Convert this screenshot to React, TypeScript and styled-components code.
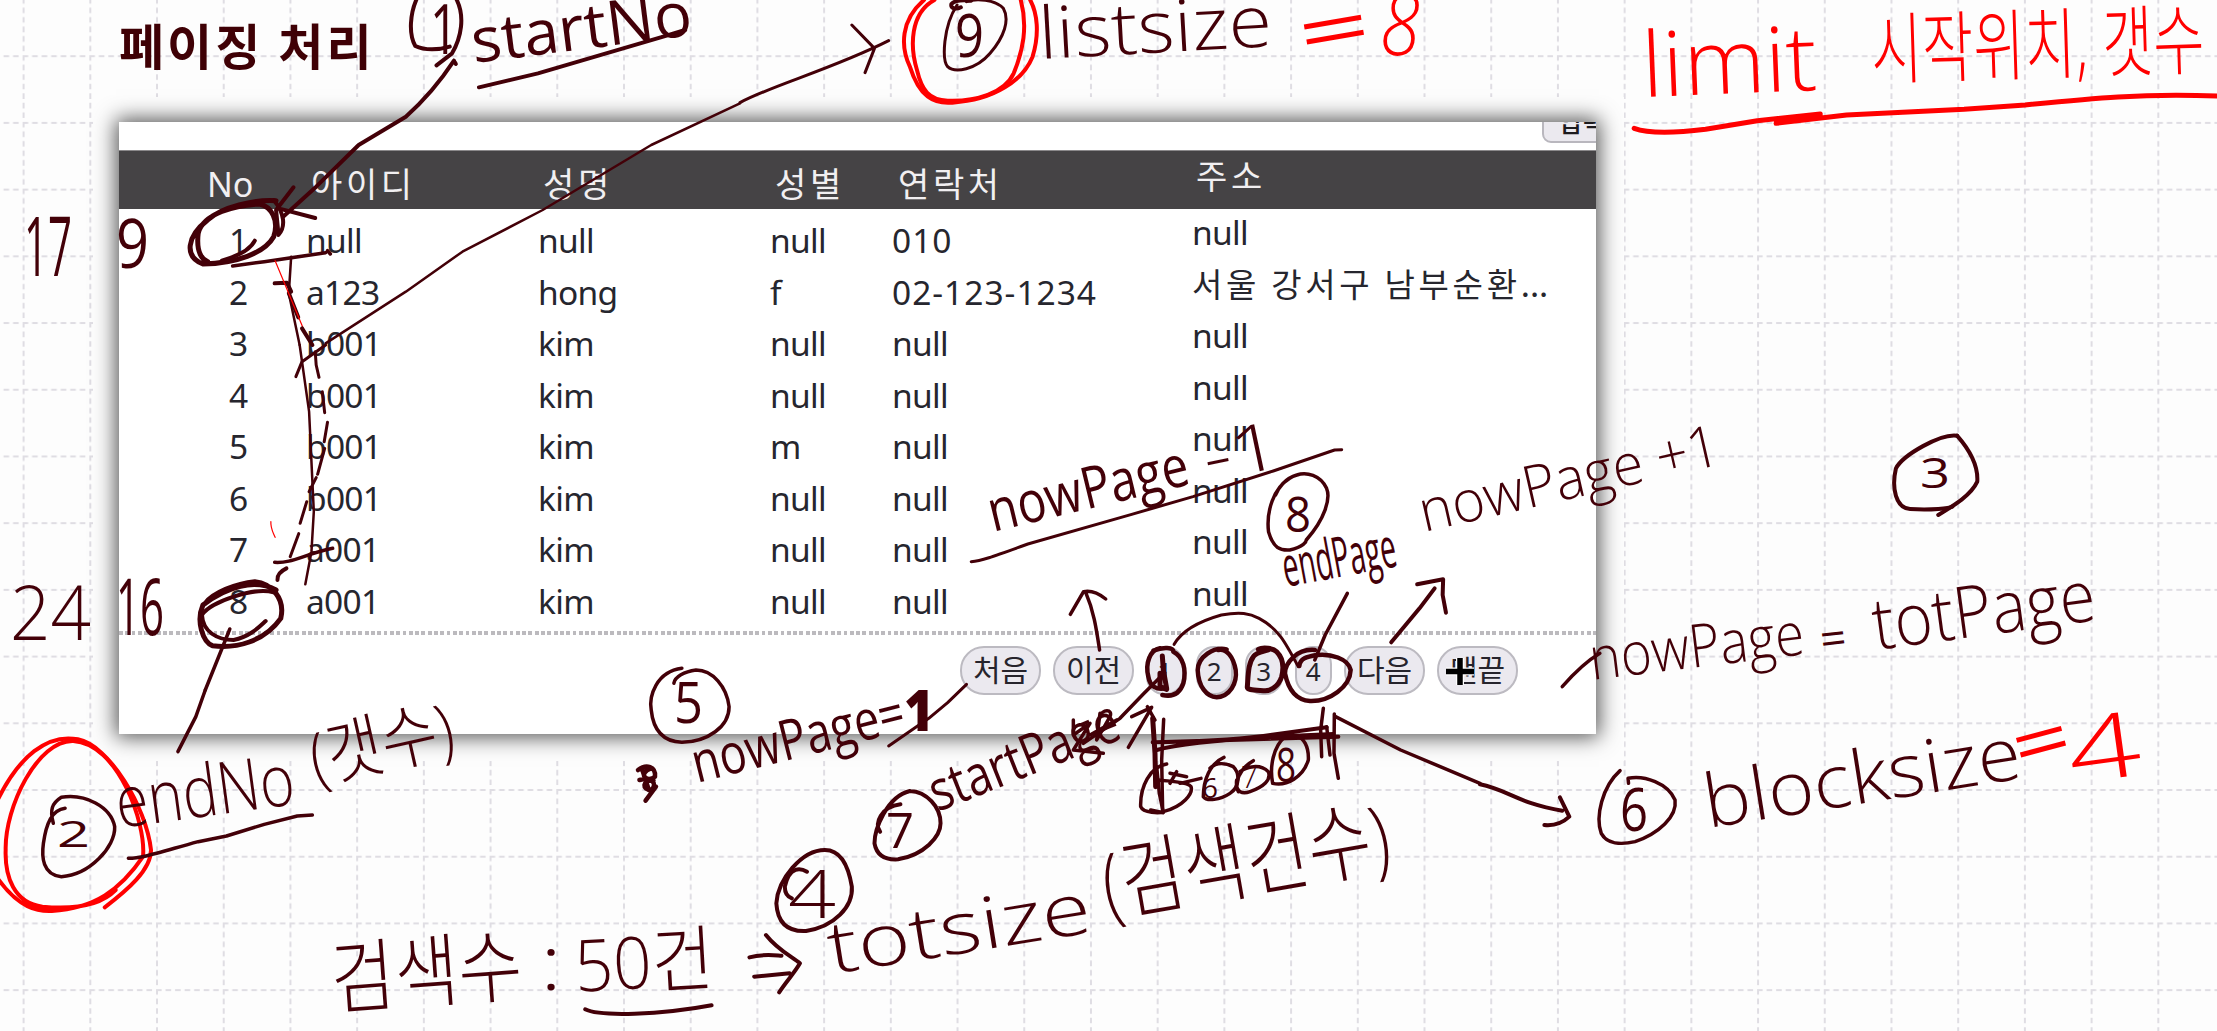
import React from 'react';
import styled, { createGlobalStyle } from 'styled-components';

const INK = '#430008';
const RED = '#ff0000';

const GlobalStyle = createGlobalStyle`
  html, body { margin: 0; padding: 0; background: #fdfdfd; }
  body { overflow: hidden; }
  * { box-sizing: border-box; }
`;

const Board = styled.main`
  position: relative;
  width: 2217px;
  height: 1031px;
  overflow: hidden;
  background: #fdfdfd;
  font-family: 'Noto Sans', 'Noto Sans CJK KR', sans-serif;
`;

const GridPaper = styled.svg`
  position: absolute;
  inset: 0;
`;

const Slide = styled.div`
  position: relative;
  display: flex;
  flex-direction: column;
  align-items: flex-start;
  padding-left: 93px;
`;

const Title = styled.h1`
  margin: 0;
  height: 97px;
  padding: 0 0 0 26px;
  font: 700 49px/88px 'Noto Sans CJK KR', sans-serif;
  letter-spacing: 3px;
  word-spacing: 1px;
  color: #3f0005;
  white-space: nowrap;
`;

const Mount = styled.div`
  padding: 25px 28px 27px 26px;
  background: #fdfdfd;
`;

const Panel = styled.section`
  display: flex;
  flex-direction: column;
  width: 1477px;
  height: 612px;
  background: #fff;
  overflow: hidden;
`;

const Shadow = styled.div`
  box-shadow: 0 0 20px 3px rgba(0, 0, 0, 0.68);
`;

const TopStrip = styled.div`
  display: flex;
  justify-content: flex-end;
  align-items: flex-end;
  height: 28px;
  padding-bottom: 7px;
`;

const CutButton = styled.div`
  display: flex;
  flex: none;
  align-items: flex-end;
  width: 86px;
  height: 48px;
  margin-right: -32px;
  padding: 0 14px 3px;
  border: 2px solid #b9b7be;
  border-radius: 9px;
  background: #ebe9ef;
  font: 500 26px/34px 'Noto Sans CJK KR', sans-serif;
  color: #1c1a1e;
`;

const Columns = styled.div`
  display: grid;
  grid-template-columns: 188px 232px 232px 122px 300px 1fr;
`;

const HeadRow = styled(Columns)`
  height: 59px;
  background: #454345;
  border-top: 1px solid #8b898b;
  color: #f1eff1;
`;

const HeadCell = styled.div<{ $inset: number; $lift?: boolean; $tight?: boolean }>`
  padding: ${(p) => (p.$lift ? 5 : 13)}px 0 0 ${(p) => p.$inset}px;
  font: 400 34px/40px 'Noto Sans', 'Noto Sans CJK KR', sans-serif;
  letter-spacing: ${(p) => (p.$tight ? 0 : 3.6)}px;
  white-space: nowrap;
`;

const Rows = styled.div`
  display: flex;
  flex-direction: column;
  padding-top: 7px;
  height: 422px;
`;

const Row = styled(Columns)`
  flex: none;
  height: 51.5px;
  color: #26262e;
`;

const Cell = styled.div<{ $kind?: 'no' | 'phone' | 'address' }>`
  padding-left: ${(p) => (p.$kind === 'no' ? 111 : 0)}px;
  margin-top: ${(p) => (p.$kind === 'address' ? -8 : 0)}px;
  margin-left: -1px;
  font-size: 33.5px;
  line-height: 48px;
  letter-spacing: ${(p) => (p.$kind === 'phone' ? '1px' : '-0.7px')};
  white-space: nowrap;
`;

const Korean = styled.span`
  font: 400 33px/40px 'Noto Sans CJK KR', sans-serif;
  letter-spacing: 3.7px;
`;

const Dots = styled.span`
  letter-spacing: 0;
`;

const DottedRule = styled.div`
  flex: none;
  height: 4px;
  background: repeating-linear-gradient(90deg, #bcbabe 0 3.8px, transparent 3.8px 6.3px);
`;

const Pager = styled.nav`
  display: flex;
  gap: 12px;
  padding: 11px 0 0 841px;
`;

const PageButton = styled.div<{ $wide?: boolean }>`
  display: flex;
  align-items: center;
  justify-content: center;
  width: ${(p) => (p.$wide ? 81 : 37.5)}px;
  height: 49px;
  border: 2px solid #bcbac1;
  border-radius: ${(p) => (p.$wide ? 24 : 18)}px;
  background: #ebe9ef;
  font: 400 ${(p) => (p.$wide ? 30 : 26)}px/40px 'Noto Sans', 'Noto Sans CJK KR', sans-serif;
  padding-bottom: ${(p) => (p.$wide ? 1 : 0)}px;
  color: #26242c;
`;

const InkLayer = styled.svg`
  position: absolute;
  inset: 0;
  fill: none;
  stroke-linecap: round;
  stroke-linejoin: round;

  path { vector-effect: non-scaling-stroke; }
`;

const Script = styled.text`
  font-family: 'Open Sans', 'Noto Sans CJK KR', sans-serif;
  stroke: none;
  white-space: pre;
`;

type WordProps = {
  t: string;
  from: [number, number];
  to: [number, number];
  size: number;
  color?: string;
  weight?: number;
  italic?: boolean;
};

const Word = ({ t, from, to, size, color = INK, weight = 300, italic }: WordProps) => {
  const dx = to[0] - from[0];
  const dy = to[1] - from[1];
  const angle = (Math.atan2(dy, dx) * 180) / Math.PI;
  return (
    <Script
      transform={`translate(${from[0]} ${from[1]}) rotate(${angle.toFixed(2)})`}
      textLength={Math.hypot(dx, dy).toFixed(1)}
      lengthAdjust="spacingAndGlyphs"
      fontSize={size}
      fontWeight={weight}
      fontStyle={italic ? 'italic' : 'normal'}
      fill={color}
    >
      {t}
    </Script>
  );
};

type Stroke = [string, number?, string?];

const Strokes = ({ x, y, sx = 0.4719, sy = 0.33333, list }: { x: number; y: number; sx?: number; sy?: number; list: Stroke[] }) => (
  <g transform={`translate(${x} ${y}) scale(${sx} ${sy})`}>
    {list.map(([d, w = 3, c = INK], i) => (
      <path key={i} d={d} strokeWidth={w} stroke={c} />
    ))}
  </g>
);

const topLeft: Stroke[] = [
  ['M882 0 C870 40 865 100 880 138 C900 152 930 150 953 140', 4],
  ['M968 0 C985 50 978 110 958 160 L925 196', 4],
  ['M1015 262 L1140 220 L1400 112 L1452 90', 4],
  ['M956 194 L962 182 L966 192 M962 182 C935 240 900 300 860 350 L760 435 L670 560 L600 650', 4],
  ['M622 562 L585 630 L590 700 M590 625 L668 654', 4],
  ['M585 602 C540 598 470 620 440 660 C395 710 390 770 430 792 C500 790 560 760 580 710 C592 660 575 620 550 612 C500 615 430 640 420 700 C415 760 430 780 440 785', 5],
  ['M580 600 C603 640 606 680 590 705 M540 722 C530 750 500 770 470 782', 4],
  ['M493 798 L560 785 L690 758 M694 752 L700 762', 3.5],
  ['M1568 310 L1380 435 L1150 630 L980 755 L860 875 L690 1030', 2.5],
  ['M617 770 L612 880 L635 1035', 2.5],
  ['M582 850 L608 848 L617 875 M612 880 L632 952', 4],
  ['M583 782 L650 1010', 1.2, RED],
  ['M640 985 L662 1035', 4],
];

const topMiddle: Stroke[] = [
  ['M0 308 C60 260 200 205 315 122 M237 75 L285 145 L265 218', 3],
  ['M390 0 C340 60 340 140 360 200 C380 290 410 313 450 308 C540 300 600 240 620 170 C635 100 630 40 615 0', 4, RED],
  ['M412 0 C360 40 360 140 375 210 C385 270 400 300 440 302 C500 305 560 280 580 220 C600 150 610 80 595 0', 4, RED],
  ['M468 22 C460 28 445 28 448 12 C455 0 475 0 490 2', 4],
  ['M460 15 C430 80 428 180 440 200 C455 220 500 210 530 160 C560 110 572 60 558 25 C540 -2 500 -5 480 5', 3],
];

const topRight: Stroke[] = [
  ['M328 385 C360 402 410 400 480 388 L590 362 L724 342 M630 370 L780 345 L1030 328 L1160 315 C1300 295 1400 280 1568 288', 5, RED],
];

const middleLeft: Stroke[] = [
  ['M690 0 L640 50 L627 95', 3],
  ['M635 0 L655 200 L665 500 L660 620 L647 718', 2.5],
  ['M668 20 L670 60 L676 97 M683 140 L688 203 M694 232 L687 290 M688 310 L673 388 M670 398 L655 440 M650 470 L636 535 M633 566 L615 635', 3],
  ['M607 670 C595 678 587 690 588 705', 4],
  ['M582 652 C620 655 640 630 705 610', 3.5],
  ['M574 530 C573 550 578 560 583 577', 1.2, RED],
  ['M585 735 C540 700 480 725 430 780 C415 830 430 890 450 902 C500 912 560 890 595 820 C605 760 575 715 540 710 C500 715 450 745 435 775', 5],
  ['M580 742 C540 725 445 770 428 810 C430 860 460 885 495 885 C530 875 550 845 563 828', 4],
  ['M487 852 L435 1035', 3.5],
];

const middle: Stroke[] = [
  ['M490 650 C510 648 530 638 610 597 L830 508 L960 455 L1130 378 L1260 315 L1275 314', 3],
  ['M1165 400 C1130 430 1115 500 1120 560 C1130 610 1145 617 1165 615 C1195 605 1200 590 1200 585 C1240 520 1252 460 1243 430 C1230 390 1200 380 1180 390 C1155 400 1140 430 1135 450', 3.5],
  ['M1287 745 L1240 870 L1218 945', 3.5],
  ['M762 915 C755 850 750 800 732 740 M700 808 L728 740 C745 735 760 745 775 762', 3.5],
  ['M920 898 C935 860 970 830 1020 810 C1060 800 1080 805 1100 820 C1140 850 1155 890 1183 965', 3],
  ['M1380 892 L1440 790 L1472 730 M1435 718 L1490 703 L1489 750 L1496 803', 4],
];

const middleRight: Stroke[] = [
  ['M1015 272 C980 265 900 330 885 370 C875 430 885 490 915 492 C960 496 1000 490 1005 485', 4],
  ['M1015 272 C1045 320 1060 370 1058 410 C1045 450 1010 480 975 510', 4],
  ['M175 1025 C200 985 225 950 255 925', 3.5],
];

const bottomLeft: Stroke[] = [
  ['M435 0 L415 80 L377 185', 3.5],
  ['M113 400 C105 360 110 340 130 322 C180 310 235 350 243 410 C245 470 190 555 130 560 C90 555 88 500 92 460 C98 400 110 360 138 355', 3.5],
  ['M-5 330 C40 200 100 130 165 148 C230 165 310 350 320 480 C320 540 270 600 222 652', 4, RED],
  ['M-5 565 C40 655 80 665 110 663 C200 655 255 600 303 500 C310 400 250 160 155 153 C80 150 10 350 12 480 C10 560 30 640 90 650 C150 658 210 650 245 600', 4, RED],
  ['M272 505 C300 505 330 490 420 455 L480 438 L560 403 L630 378 L662 375', 3.5],
  ['M1445 -65 C1390 -55 1375 20 1380 60 C1385 130 1410 155 1445 157 C1500 155 1545 110 1545 50 C1540 -10 1510 -60 1475 -60 C1450 -55 1430 -40 1428 -20', 3.5],
  ['M1352 240 C1370 220 1390 230 1388 260 C1370 280 1350 250 1380 235 M1355 270 C1380 260 1395 280 1380 300 C1360 300 1360 270 1385 270 M1360 235 L1375 300 M1390 290 L1368 332', 4.5],
  ['M1240 958 C1270 980 1400 975 1508 946', 4],
];

const bottomMiddle: Stroke[] = [
  ['M315 168 L400 85 L440 38 L480 -17', 3],
  ['M297 425 C283 400 300 350 340 343 M360 303 C310 320 285 420 285 460 C290 500 310 510 335 508 C390 495 425 440 425 400 C425 350 395 305 360 303', 4],
  ['M142 545 C130 535 105 525 95 590 C95 610 100 620 110 625', 4],
  ['M180 480 C130 480 80 570 77 640 C80 710 110 725 140 723 C200 710 240 650 237 590 C230 530 215 480 180 480', 4],
  ['M20 802 C50 790 80 797 88 797 M30 860 L105 850 M55 735 C80 780 110 800 127 820 C115 850 100 870 83 907', 4],
  ['M1262 80 L1400 180 L1568 280', 3.5],
];

const bottomRight: Stroke[] = [
  ['M0 283 C60 300 80 340 175 362 M170 322 L190 380 C175 400 160 408 137 405', 4],
  ['M298 242 C260 290 245 380 258 430 C270 462 300 465 330 455 C380 430 420 380 415 330 C400 280 350 255 315 265 L316 280', 3.5],
];

const pagerMarks: Stroke[] = [
  ['M90 85 C60 90 45 130 55 170 C60 200 80 210 105 205 M70 92 C100 80 130 82 130 95 C160 110 170 150 160 190 C150 220 130 232 97 225', 4.5],
  ['M97 108 L100 150 L110 205 M90 160 L90 200 L110 208', 5],
  ['M104 158 L40 222 L-30 295 L-140 370', 3.5],
  ['M290 88 C250 80 205 110 203 150 C205 200 230 230 260 232 C300 228 322 190 317 150 C310 110 290 85 265 90', 4.5],
  ['M385 88 C400 80 430 85 440 95 C465 120 460 150 455 170 C445 200 420 215 400 212 C370 210 350 210 352 200 C355 160 355 130 370 110 C380 95 400 95 415 90', 5],
  ['M555 90 C500 85 465 130 465 160 C475 210 500 240 540 243 C600 245 660 200 662 150 C655 115 600 100 560 105 C530 110 510 115 508 138', 4.5],
  ['M5 290 L65 262 L-5 382 M52 260 L75 300', 3.5],
  ['M68 295 L75 400 L77 500', 5],
  ['M101 298 L95 420 L98 575', 3.5],
  ['M68 367 C200 365 300 360 400 348 L590 322 M75 367 L625 350 M80 390 C150 370 300 355 610 342', 4],
  ['M580 265 L572 330 L575 410 M590 320 L600 405 M613 282 L612 400 L625 475', 3.5],
  ['M110 432 C60 440 30 500 32 560 C40 580 90 580 100 575 C160 560 190 520 183 500 C170 485 130 485 85 480', 3.5],
  ['M120 460 L170 470 M140 455 L120 490 M150 490 L213 475 M80 440 L88 520 L100 578 L62 570', 3.5],
  ['M282 412 C240 430 220 480 220 530 C230 545 270 540 300 520 C330 500 330 460 310 440 C280 425 255 430 240 445', 3.5],
  ['M320 480 C315 520 340 522 360 515 C400 500 425 480 415 455 C390 430 350 440 330 455 M370 422 C330 445 310 490 325 515', 3.5],
  ['M465 350 C430 380 418 440 428 490 C470 500 520 470 535 420 C537 380 520 350 500 352', 3.5],
  ['M-90 280 L-100 360 L-60 290 C-50 265 -85 268 -90 290 M-170 300 L-170 345 L-120 310 L-170 390 L-80 400 M-120 345 L-40 300', 3.5],
];

const headers: { t: string; inset: number; lift?: boolean; tight?: boolean }[] = [
  { t: 'No', inset: 88, tight: true },
  { t: '아이디', inset: 4 },
  { t: '성명', inset: 4 },
  { t: '성별', inset: 4 },
  { t: '연락처', inset: 5 },
  { t: '주소', inset: 3, lift: true },
];

const members = [
  ['1', 'null', 'null', 'null', '010', 'null'],
  ['2', 'a123', 'hong', 'f', '02-123-1234', '서울 강서구 남부순환...'],
  ['3', 'b001', 'kim', 'null', 'null', 'null'],
  ['4', 'b001', 'kim', 'null', 'null', 'null'],
  ['5', 'b001', 'kim', 'm', 'null', 'null'],
  ['6', 'b001', 'kim', 'null', 'null', 'null'],
  ['7', 'a001', 'kim', 'null', 'null', 'null'],
  ['8', 'a001', 'kim', 'null', 'null', 'null'],
];

const pages = ['처음', '이전', '1', '2', '3', '4', '다음', '맨끝'];

const Address = ({ value }: { value: string }) =>
  value === 'null' ? (
    <>{value}</>
  ) : (
    <Korean>
      {value.replace('...', '')}
      <Dots>...</Dots>
    </Korean>
  );

const Annotations = () => (
  <InkLayer width="2217" height="1031" viewBox="0 0 2217 1031">
    <Strokes x={0} y={0} list={topLeft} />
    <Strokes x={740} y={0} list={topMiddle} />
    <Strokes x={1480} y={0} sx={0.47} list={topRight} />
    <Strokes x={0} y={345} list={middleLeft} />
    <Strokes x={740} y={345} list={middle} />
    <Strokes x={1480} y={345} sx={0.47} list={middleRight} />
    <Strokes x={0} y={690} list={bottomLeft} />
    <Strokes x={740} y={690} list={bottomMiddle} />
    <Strokes x={1480} y={690} sx={0.47} list={bottomRight} />
    <Strokes x={1130} y={620} sx={0.33333} list={pagerMarks} />

    <Word t="1" from={[430, 54]} to={[458, 54]} size={70} weight={400} />
    <Word t="startNo" from={[474, 63]} to={[694, 35]} size={62} weight={400} />
    <Word t="9" from={[955, 57]} to={[984, 57]} size={60} weight={400} />
    <Word t="listsize" from={[1040, 59]} to={[1273, 46]} size={72} />
    <Word t="=" from={[1303, 62]} to={[1374, 50]} size={76} color={RED} weight={400} />
    <Word t="8" from={[1380, 55]} to={[1420, 55]} size={86} color={RED} weight={300} italic />
    <Word t="limit" from={[1643, 97]} to={[1818, 90]} size={90} color={RED} />
    <Word t="시작위치, 갯수" from={[1872, 78]} to={[2205, 68]} size={78} color={RED} />
    <Word t="17" from={[24, 276]} to={[72, 276]} size={82} weight={400} />
    <Word t="9" from={[116, 268]} to={[149, 268]} size={68} weight={400} />
    <Word t="24" from={[10, 640]} to={[91, 640]} size={76} />
    <Word t="16" from={[116, 635]} to={[164, 635]} size={78} weight={400} />
    <Word t="2" from={[57, 847]} to={[90, 847]} size={36} weight={400} />
    <Word t="endNo" from={[119, 828]} to={[297, 804]} size={72} />
    <Word t="(갯수)" from={[316, 784]} to={[458, 752]} size={70} />
    <Word t="5" from={[674, 723]} to={[703, 723]} size={56} weight={400} />
    <Word t="nowPage=" from={[697, 783]} to={[908, 730]} size={56} weight={400} />
    <Word t="1" from={[904, 731]} to={[934, 731]} size={56} weight={800} />
    <Word t="nowPage" from={[993, 532]} to={[1192, 484]} size={58} weight={400} />
    <Word t="-1" from={[1208, 482]} to={[1284, 466]} size={66} />
    <Word t="8" from={[1285, 532]} to={[1311, 532]} size={50} weight={400} />
    <Word t="endPage" from={[1286, 587]} to={[1399, 566]} size={56} weight={400} />
    <Word t="nowPage +1" from={[1424, 532]} to={[1723, 464]} size={58} />
    <Word t="3" from={[1920, 488]} to={[1950, 488]} size={42} weight={400} />
    <Word t="nowPage" from={[1592, 680]} to={[1806, 654]} size={60} />
    <Word t="=" from={[1822, 656]} to={[1848, 653]} size={46} weight={400} />
    <Word t="totPage" from={[1876, 650]} to={[2098, 620]} size={72} />
    <Word t="6" from={[1620, 831]} to={[1648, 831]} size={60} weight={400} />
    <Word t="blocksize" from={[1708, 828]} to={[2024, 778]} size={74} />
    <Word t="=" from={[2020, 775]} to={[2076, 760]} size={76} color={RED} weight={400} />
    <Word t="4" from={[2072, 784]} to={[2144, 774]} size={90} color={RED} />
    <Word t="7" from={[886, 848]} to={[914, 848]} size={50} weight={400} />
    <Word t="startPage" from={[938, 812]} to={[1124, 738]} size={56} weight={400} />
    <Word t="4" from={[788, 918]} to={[836, 918]} size={66} />
    <Word t="totsize" from={[832, 974]} to={[1094, 932]} size={72} />
    <Word t="(검색건수)" from={[1108, 916]} to={[1394, 866]} size={86} />
    <Word t="검색수" from={[333, 1008]} to={[524, 994]} size={80} />
    <Word t=":" from={[540, 990]} to={[562, 990]} size={76} />
    <Word t="50건" from={[576, 992]} to={[715, 984]} size={72} />
    <Word t="6" from={[1202, 798]} to={[1218, 798]} size={28} weight={400} />
    <Word t="7" from={[1241, 788]} to={[1258, 788]} size={32} />
    <Word t="8" from={[1276, 782]} to={[1296, 782]} size={48} weight={400} />

    <path d="M1446 671.5H1474M1460 658V685" stroke="#fff" strokeWidth="8" strokeLinecap="butt" />
    <path d="M1446 671.5H1474M1460 658V685" stroke="#000" strokeWidth="5.5" strokeLinecap="butt" />
  </InkLayer>
);

export default function App() {
  return (
    <Board>
      <GlobalStyle />
      <GridPaper width="2217" height="1031">
        <defs>
          <pattern id="paper" x="22.6" y="55.2" width="66.71" height="66.71" patternUnits="userSpaceOnUse">
            <path d="M0 1H66.71M1 0V66.71" stroke="#dfdde3" strokeWidth="2" strokeDasharray="5.6 3.93" />
          </pattern>
        </defs>
        <rect width="2217" height="1031" fill="url(#paper)" />
      </GridPaper>
      <Slide>
        <Title>페이징 처리</Title>
        <Mount>
          <Shadow>
            <Panel>
              <TopStrip>
                <CutButton>입력</CutButton>
              </TopStrip>
              <HeadRow>
                {headers.map((h) => (
                  <HeadCell key={h.t} $inset={h.inset} $lift={h.lift} $tight={h.tight}>{h.t}</HeadCell>
                ))}
              </HeadRow>
              <Rows>
                {members.map(([no, id, name, gender, phone, address]) => (
                  <Row key={no}>
                    <Cell $kind="no">{no}</Cell>
                    <Cell>{id}</Cell>
                    <Cell>{name}</Cell>
                    <Cell>{gender}</Cell>
                    <Cell $kind={phone === 'null' ? undefined : 'phone'}>{phone}</Cell>
                    <Cell $kind="address"><Address value={address} /></Cell>
                  </Row>
                ))}
              </Rows>
              <DottedRule />
              <Pager>
                {pages.map((p) => (
                  <PageButton key={p} $wide={p.length > 1}>{p}</PageButton>
                ))}
              </Pager>
            </Panel>
          </Shadow>
        </Mount>
      </Slide>
      <Annotations />
    </Board>
  );
}
